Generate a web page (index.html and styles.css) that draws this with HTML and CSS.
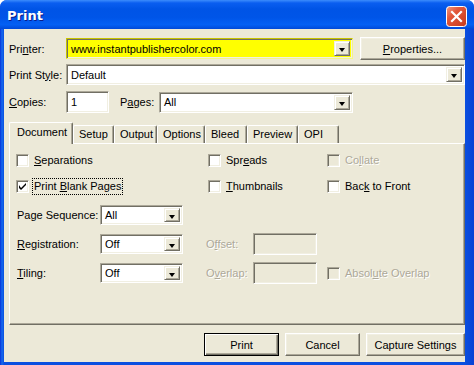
FILE: index.html
```html
<!DOCTYPE html>
<html lang="en">
<head>
    <meta charset="UTF-8">
    <title>Print</title>
    <link rel="stylesheet" href="styles.css">
</head>
<body>
    <div class="window">
        <div class="titlebar">
            <span class="title">Print</span>
            <span class="close">
                <svg width="21" height="21" viewBox="0 0 21 21">
                    <defs>
                        <linearGradient id="cg" x1="0" y1="0" x2="1" y2="1">
                            <stop offset="0" stop-color="#F09B82"/>
                            <stop offset="0.35" stop-color="#E2583A"/>
                            <stop offset="1" stop-color="#C6391C"/>
                        </linearGradient>
                    </defs>
                    <rect x="0.5" y="0.5" width="20" height="20" rx="3" fill="url(#cg)" stroke="#fff"/>
                    <path d="M6 6 L15 15 M15 6 L6 15" stroke="#fff" stroke-width="2.2" stroke-linecap="square"/>
                </svg>
            </span>
        </div>

        <div class="client">
            <div class="row row-printer">
                <label class="lbl">Pri<u>n</u>ter:</label>
                <div class="combo combo-printer"><span class="val">www.instantpublishercolor.com</span><span class="drop"></span></div>
                <button class="btn btn-props"><u>P</u>roperties...</button>
            </div>
            <div class="row row-style">
                <label class="lbl">Print St<u>y</u>le:</label>
                <div class="combo combo-style"><span class="val">Default</span><span class="drop"></span></div>
            </div>
            <div class="row row-copies">
                <label class="lbl"><u>C</u>opies:</label>
                <div class="field field-copies">1</div>
                <label class="lbl lbl-pages">P<u>a</u>ges:</label>
                <div class="combo combo-pages"><span class="val">All</span><span class="drop"></span></div>
            </div>

            <div class="tabs">
                <span class="tab active tab-document">Document</span>
                <span class="tab tab-setup">Setup</span>
                <span class="tab tab-output">Output</span>
                <span class="tab tab-options">Options</span>
                <span class="tab tab-bleed">Bleed</span>
                <span class="tab tab-preview">Preview</span>
                <span class="tab tab-opi">OPI</span>
            </div>
            <div class="panel">
                <div class="check-row">
                    <span class="check col1"><span class="box"></span><span><u>S</u>eparations</span></span>
                    <span class="check col2"><span class="box"></span><span>Spr<u>e</u>ads</span></span>
                    <span class="check col3 disabled"><span class="box"></span><span>Co<u>l</u>late</span></span>
                </div>
                <div class="check-row">
                    <span class="check col1"><span class="box"><svg width="7" height="7" viewBox="0 0 7 7"><path d="M0 2 L0 5 L2 7 L7 2 L7 0 L2 5 Z" fill="#000"/></svg></span><span class="focus">Print <u>B</u>lank Pages</span></span>
                    <span class="check col2"><span class="box"></span><span><u>T</u>humbnails</span></span>
                    <span class="check col3"><span class="box"></span><span>Bac<u>k</u> to Front</span></span>
                </div>

                <div class="form-row first">
                    <label class="flbl">Page Sequence:</label>
                    <div class="combo combo-small"><span class="val">All</span><span class="drop"></span></div>
                </div>
                <div class="form-row">
                    <label class="flbl"><u>R</u>egistration:</label>
                    <div class="combo combo-small"><span class="val">Off</span><span class="drop"></span></div>
                    <label class="olbl disabled">O<u>f</u>fset:</label>
                    <div class="field field-off"></div>
                </div>
                <div class="form-row">
                    <label class="flbl"><u>T</u>iling:</label>
                    <div class="combo combo-small"><span class="val">Off</span><span class="drop"></span></div>
                    <label class="olbl disabled">O<u>v</u>erlap:</label>
                    <div class="field field-off"></div>
                    <span class="check disabled check-abs"><span class="box"></span><span>Absol<u>u</u>te Overlap</span></span>
                </div>
            </div>

            <div class="buttons">
                <button class="btn btn-default">Print</button>
                <button class="btn btn-cancel">Cancel</button>
                <button class="btn btn-capture">Capture Settings</button>
            </div>
        </div>
    </div>
</body>
</html>
```

FILE: styles.css
```css
/* Base */
body {
    margin: 0;
    background: #fff;
    font-family: "Liberation Sans", Arial, sans-serif;
    font-size: 11px;
    color: #000;
}
u {
    text-decoration: underline;
    text-underline-offset: 1px;
}

/* Window frame */
.window {
    width: 474px;
    height: 365px;
    display: flex;
    flex-direction: column;
    background: linear-gradient(to right, #0831D9 0, #166AEE 2px, #0A4FE0 4px, #0A4FE0 calc(100% - 9px), #0841D4 100%);
    border-radius: 7px 7px 0 0;
    overflow: hidden;
}
.titlebar {
    height: 29px;
    flex: none;
    display: flex;
    align-items: center;
    justify-content: space-between;
    padding: 0 7px 0 7px;
    background: linear-gradient(to bottom, #3C8CFC 0, #0A5EF0 3px, #0054E6 9px, #0055E8 60%, #0460F4 85%, #0049D8 100%);
}
.title {
    color: #fff;
    font-family: "DejaVu Sans", "Liberation Sans", sans-serif;
    font-weight: bold;
    font-size: 13px;
    text-shadow: 1px 1px #0A1E8A;
    margin-top: 1px;
}
.close {
    display: flex;
    margin-top: 4px;
}

/* Client area */
.client {
    flex: 1;
    margin: 0 9px 3px 4px;
    padding: 8px 0 0 5px;
    background: #ECE9D8;
}
.row {
    display: flex;
    align-items: center;
}
.row-printer { height: 23px; }
.row-style { height: 21px; margin-top: 4px; }
.row-copies { height: 22px; margin-top: 6px; }
.lbl {
    width: 57px;
    flex: none;
}
.lbl-pages {
    width: 39px;
    margin-left: 11px;
}

/* Sunken fields and combos */
.combo, .field {
    box-sizing: border-box;
    display: flex;
    align-items: center;
    background: #fff;
    border: 1px solid;
    border-color: #ACA899 #fff #fff #ACA899;
    box-shadow: inset 1px 1px #716F64, inset -1px -1px #F1EFE2;
    flex: none;
}
.combo { height: 21px; padding: 2px; }
.combo .val {
    flex: 1;
    padding-left: 2px;
    white-space: nowrap;
}
.drop {
    width: 16px;
    align-self: stretch;
    box-sizing: border-box;
    background: #ECE9D8;
    border: 1px solid;
    border-color: #F1EFE2 #716F64 #716F64 #F1EFE2;
    box-shadow: inset 1px 1px #fff, inset -1px -1px #ACA899;
    position: relative;
}
.drop::after {
    content: "";
    position: absolute;
    left: 4px;
    top: 6px;
    border-left: 3.5px solid transparent;
    border-right: 3.5px solid transparent;
    border-top: 4px solid #000;
}
.combo-printer {
    width: 287px;
    background: #FFFF00;
    border-color: #C8C400 #F4F488 #F4F488 #C8C400;
}
.combo-style { width: 399px; }
.combo-pages { width: 194px; }
.combo-small { width: 83px; height: 20px; }
.field-copies {
    width: 43px;
    height: 22px;
    padding-left: 4px;
}

/* Buttons */
.btn {
    box-sizing: border-box;
    height: 23px;
    font-family: inherit;
    font-size: 11px;
    color: #000;
    background: #ECE9D8;
    border: 1px solid;
    border-color: #fff #716F64 #716F64 #fff;
    box-shadow: inset -1px -1px #ACA899, inset 1px 1px #F1EFE2;
    padding: 0;
}
.btn-props {
    width: 105px;
    margin-left: 7px;
}
.btn-default {
    width: 75px;
    border-color: #000;
    box-shadow: inset 1px 1px #fff, inset -1px -1px #716F64, inset -2px -2px #ACA899;
}
.btn-cancel { width: 75px; }
.btn-capture { width: 99px; }
.buttons {
    display: flex;
    justify-content: flex-end;
    gap: 6px;
    margin-top: 8px;
}

/* Tabs */
.tabs {
    display: flex;
    align-items: flex-end;
    height: 21px;
    margin-top: 9px;
    position: relative;
    z-index: 1;
}
.tab {
    box-sizing: border-box;
    height: 18px;
    padding-left: 5px;
    line-height: 16px;
    border-top: 1px solid #fff;
    border-left: 1px solid #fff;
    border-right: 1px solid #716F64;
    box-shadow: inset -1px 0 #ACA899;
    border-radius: 2px 2px 0 0;
}
.tab.active {
    height: 22px;
    margin-bottom: -1px;
    background: #ECE9D8;
    padding-left: 7px;
    line-height: 19px;
}
.tab-document { width: 64px; }
.tab-setup { width: 41px; }
.tab-output { width: 43px; }
.tab-options { width: 48px; }
.tab-bleed { width: 42px; }
.tab-preview { width: 51px; }
.tab-opi { width: 41px; }

.panel {
    box-sizing: border-box;
    width: 456px;
    height: 182px;
    border: 1px solid;
    border-color: #fff #716F64 #716F64 #fff;
    box-shadow: inset -1px -1px #ACA899;
    padding: 10px 0 0 6px;
}

/* Checkboxes */
.check-row {
    display: flex;
    height: 13px;
    margin-bottom: 13px;
}
.check {
    display: flex;
    align-items: center;
    gap: 5px;
    line-height: 13px;
    white-space: nowrap;
}
.col1 { width: 192px; }
.col2 { width: 119px; }
.box {
    box-sizing: border-box;
    width: 13px;
    height: 13px;
    flex: none;
    display: flex;
    align-items: center;
    justify-content: center;
    background: #fff;
    border: 1px solid;
    border-color: #ACA899 #fff #fff #ACA899;
    box-shadow: inset 1px 1px #716F64, inset -1px -1px #F1EFE2;
}
.focus {
    outline: 1px dotted #000;
    outline-offset: 1px;
    margin-left: 0;
}
.disabled {
    color: #ACA899;
    text-shadow: 1px 1px #fff;
}
.disabled .box {
    background: #ECE9D8;
}

/* Form rows inside the panel */
.form-row {
    display: flex;
    align-items: center;
    height: 22px;
    margin-top: 7px;
    margin-left: 1px;
}
.form-row.first {
    margin-top: -2px;
}
.flbl {
    width: 83px;
    flex: none;
}
.olbl {
    width: 47px;
    margin-left: 23px;
    flex: none;
}
.field-off {
    width: 64px;
    height: 22px;
    background: #ECE9D8;
}
.check-abs {
    margin-left: 10px;
}
```
